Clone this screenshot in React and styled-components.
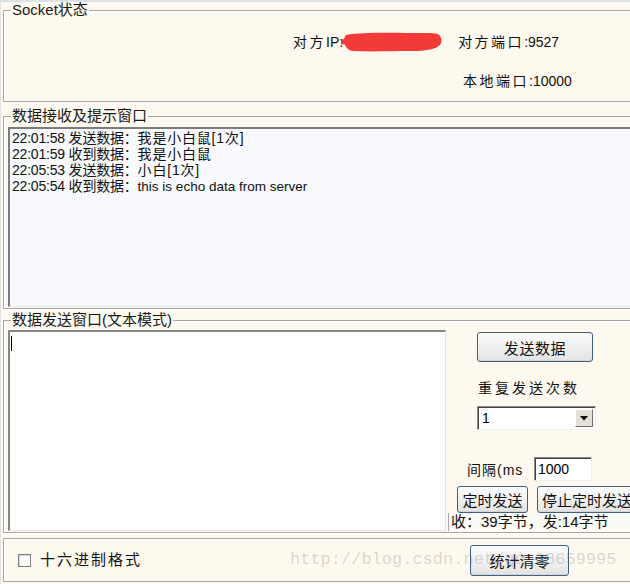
import React from "react";
import styled, { createGlobalStyle } from "styled-components";

const GlobalStyle = createGlobalStyle`
  html, body {
    margin: 0;
    background: #fdf9ef;
    overflow: hidden;
  }
  body {
    font-family: "Liberation Sans", "Noto Sans CJK SC", sans-serif;
    font-size: 13px;
    color: #000;
  }
`;

const logLines = [
  { time: "22:01:58", kind: "发送数据：", text: "我是小白鼠[1次]" },
  { time: "22:01:59", kind: "收到数据：", text: "我是小白鼠" },
  { time: "22:05:53", kind: "发送数据：", text: "小白[1次]" },
  { time: "22:05:54", kind: "收到数据：", text: "this is echo data from server", latin: true },
];

const App = () => {
  return (
    <>
      <GlobalStyle />
      <Window>
        <Group $top={0}>
          <Legend>Socket状态</Legend>
          <StatusInfo>
            <InfoRow>
              <Info>
                <Cjk>对方</Cjk>IP:
              </Info>
              <Redacted width="104" height="22" viewBox="0 0 104 22">
                <path
                  d="M5 4 C 22 1, 50 2, 72 2 S 98 1, 100 7 C 103 15, 94 20, 72 20 S 30 21, 12 20 C 3 19, 1 8, 5 4 Z"
                  fill="#f53a3a"
                />
                <path d="M1 11 L 8 10" stroke="#f53a3a" strokeWidth="5" strokeLinecap="round" />
              </Redacted>
              <Info $gap={13}>
                <Cjk>对方端口</Cjk>:9527
              </Info>
            </InfoRow>
            <InfoRow $second>
              <Info>
                <Cjk>本地端口</Cjk>:10000
              </Info>
            </InfoRow>
          </StatusInfo>
        </Group>

        <Group $top={6}>
          <Legend>数据接收及提示窗口</Legend>
          <LogBox>
            {logLines.map((l, i) => (
              <LogLine key={i}>
                {l.time} {l.kind}
                <LogText $latin={l.latin}>{l.text}</LogText>
              </LogLine>
            ))}
          </LogBox>
        </Group>

        <Group $top={3}>
          <Legend>数据发送窗口(文本模式)</Legend>
          <SendArea>
            <SendText>
              <Caret />
            </SendText>
            <SidePanel>
              <PushButton $w={116} $h={30} $ml={31} $mt={2} $spacing={0.6}>
                发送数据
              </PushButton>
              <SideLabel $ml={32} $mt={17}>重复发送次数</SideLabel>
              <Combo>
                <ComboValue>1</ComboValue>
                <ComboArrow>
                  <svg width="8" height="5" viewBox="0 0 8 5">
                    <path d="M0 0 H8 L4 4.5 Z" fill="#000" />
                  </svg>
                </ComboArrow>
              </Combo>
              <IntervalRow>
                <IntervalLabel>间隔(ms</IntervalLabel>
                <Field>1000</Field>
              </IntervalRow>
              <ButtonRow>
                <PushButton $w={71} $h={27}>定时发送</PushButton>
                <PushButton $w={104} $h={27} $ml={9} $align="left">停止定时发送</PushButton>
              </ButtonRow>
              <Counter>收：39字节，发:14字节</Counter>
            </SidePanel>
          </SendArea>
        </Group>

        <Footer>
          <CheckLabel>
            <CheckBox />
            <span>十六进制格式</span>
          </CheckLabel>
          <PushButton $w={99} $h={31} $ml={328}>统计清零</PushButton>
          <Watermark>http://blog.csdn.net/qq_38659995</Watermark>
        </Footer>
      </Window>
    </>
  );
};

export default App;

const Window = styled.div`
  width: 640px;
  height: 584px;
  box-sizing: border-box;
  border-top: 2px solid #dde2ea;
  padding-left: 3px;
  box-shadow: inset 1px 0 0 #e2e2e2;
`;

const Group = styled.fieldset`
  margin: ${(p) => p.$top}px 0 0 0;
  padding: 0;
  min-width: 0;
  border: 1px solid #a7a7a7;
  box-shadow: inset 1px 1px 0 #ffffff, 0 1px 0 #ffffff;
`;

const Legend = styled.legend`
  margin-left: 7px;
  padding: 0 1px;
  font-size: 15px;
  line-height: 16px;
  color: #1a1a1a;
`;

const StatusInfo = styled.div`
  padding: 15px 0 11px 289px;
`;

const InfoRow = styled.div`
  display: flex;
  align-items: center;
  height: 18px;
  margin-top: ${(p) => (p.$second ? 21 : 0)}px;
  padding-left: ${(p) => (p.$second ? 170 : 0)}px;
`;

const Info = styled.span`
  font-size: 14px;
  line-height: 18px;
  margin-left: ${(p) => p.$gap || 0}px;
  color: #111;
`;

const Cjk = styled.span`
  letter-spacing: 2.5px;
`;

const Redacted = styled.svg`
  display: block;
  margin-left: -2px;
`;

const LogBox = styled.div`
  margin: 3px 0 1px 4px;
  height: 180px;
  box-sizing: border-box;
  background: #f7f9fd;
  border-top: 2px solid #7c7c7c;
  border-left: 2px solid #7c7c7c;
  border-bottom: 1px solid #e6e8ec;
  padding: 1px 0 0 2px;
`;

const LogLine = styled.div`
  font-size: 14px;
  line-height: 16px;
  letter-spacing: -0.2px;
  white-space: nowrap;
  color: #111;
`;

const LogText = styled.span`
  font-size: ${(p) => (p.$latin ? 13.5 : 14)}px;
  letter-spacing: ${(p) => (p.$latin ? 0 : 0.8)}px;
`;

const SendArea = styled.div`
  display: flex;
  padding: 2px 0 1px 4px;
`;

const SendText = styled.div`
  width: 438px;
  height: 201px;
  flex: none;
  box-sizing: border-box;
  background: #ffffff;
  border-top: 2px solid #858585;
  border-left: 2px solid #858585;
  border-right: 1px solid #e4e4e4;
  border-bottom: 1px solid #e4e4e4;
  padding: 4px 0 0 1px;
`;

const Caret = styled.div`
  width: 1px;
  height: 15px;
  background: #000;
`;

const SidePanel = styled.div`
  flex: 1;
  display: flex;
  flex-direction: column;
  align-items: flex-start;
`;

const PushButton = styled.div`
  width: ${(p) => p.$w}px;
  height: ${(p) => p.$h}px;
  flex: none;
  box-sizing: border-box;
  margin-left: ${(p) => p.$ml || 0}px;
  margin-top: ${(p) => p.$mt || 0}px;
  display: flex;
  align-items: center;
  justify-content: ${(p) => (p.$align === "left" ? "flex-start" : "center")};
  padding-left: ${(p) => (p.$align === "left" ? 4 : 0)}px;
  border: 1px solid #3e5f86;
  border-radius: 3px;
  background: linear-gradient(#fbfbfb, #eeeeee 60%, #e2e2e2);
  box-shadow: inset 0 -1px 0 #d4d4d4;
  font-size: 15px;
  letter-spacing: ${(p) => p.$spacing || 0}px;
  color: #111;
  white-space: nowrap;
`;

const SideLabel = styled.div`
  margin-left: ${(p) => p.$ml}px;
  margin-top: ${(p) => p.$mt}px;
  font-size: 14px;
  line-height: 18px;
  letter-spacing: 3px;
  color: #111;
`;

const sunken = `
  box-sizing: border-box;
  background: #ffffff;
  border-top: 1px solid #8a8a8a;
  border-left: 1px solid #8a8a8a;
  border-right: 1px solid #f0f0f0;
  border-bottom: 1px solid #f0f0f0;
  box-shadow: inset 1px 1px 0 #404040;
`;

const Combo = styled.div`
  ${sunken}
  margin: 9px 0 0 31px;
  width: 119px;
  height: 24px;
  display: flex;
  align-items: stretch;
  padding: 2px;
`;

const ComboValue = styled.div`
  flex: 1;
  font-size: 14px;
  line-height: 18px;
  padding-left: 2px;
`;

const ComboArrow = styled.div`
  width: 18px;
  display: flex;
  align-items: center;
  justify-content: center;
  background: #e3e0d8;
  border-top: 1px solid #ffffff;
  border-left: 1px solid #ffffff;
  border-right: 1px solid #6e6e6e;
  border-bottom: 1px solid #6e6e6e;
  box-sizing: border-box;
`;

const IntervalRow = styled.div`
  display: flex;
  align-items: center;
  margin: 27px 0 0 21px;
`;

const IntervalLabel = styled.span`
  width: 67px;
  font-size: 14px;
  letter-spacing: 1px;
  color: #111;
`;

const Field = styled.div`
  ${sunken}
  width: 58px;
  height: 24px;
  padding: 2px 0 0 3px;
  font-size: 14px;
  line-height: 18px;
`;

const ButtonRow = styled.div`
  display: flex;
  margin: 5px 0 0 11px;
`;

const Counter = styled.div`
  align-self: stretch;
  margin-left: 2px;
  height: 18px;
  box-sizing: border-box;
  border-left: 1px solid #a8a8a8;
  background: #fbfaf4;
  padding-left: 2px;
  font-size: 15px;
  line-height: 18px;
  white-space: nowrap;
  color: #111;
`;

const Footer = styled.div`
  position: relative;
  margin-top: 5px;
  height: 44px;
  box-sizing: border-box;
  border: 1px solid #a7a7a7;
  box-shadow: inset 1px 1px 0 #ffffff;
  display: flex;
  align-items: center;
  padding-left: 14px;
`;

const CheckLabel = styled.label`
  display: flex;
  align-items: center;
  gap: 9px;
  font-size: 15px;
  letter-spacing: 2px;
  color: #111;
  span {
    line-height: 18px;
  }
`;

const CheckBox = styled.span`
  width: 13px;
  height: 13px;
  box-sizing: border-box;
  border: 1px solid #7d7d7d;
  background: #ffffff;
  box-shadow: inset 1px 1px 0 #d8d8d8;
`;

const Watermark = styled.div`
  position: absolute;
  left: 286px;
  top: 10px;
  font-family: "Liberation Mono", monospace;
  font-size: 17px;
  line-height: 22px;
  color: rgba(120, 120, 120, 0.28);
  pointer-events: none;
  white-space: nowrap;
`;
